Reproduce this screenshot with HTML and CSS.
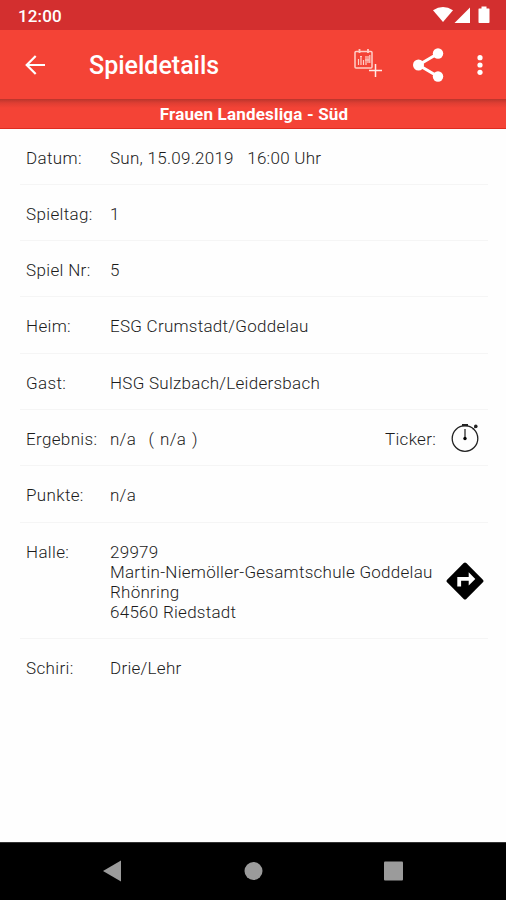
FILE: index.html
```html
<!DOCTYPE html>
<html lang="de">
<head>
<meta charset="utf-8">
<title>Spieldetails</title>
<link rel="stylesheet" href="styles.css">
</head>
<body>
<div class="screen">
  <div class="status">
    <span class="clock">12:00</span>
    <svg class="status-icons" width="58" height="18" viewBox="0 0 58 18" fill="#fff">
      <path d="M0 4.2Q10 -2 20 4.2L10 16z"/><path d="M37 1.5V17H21.5z"/>
      <path d="M46 2.5h2.5V.5h5v2H56q.5 0 .5.8v13q0 .7-.8.7h-9.4q-.8 0-.8-.7v-13q0-.8.5-.8z"/>
    </svg>
  </div>
  <header class="toolbar">
    <svg class="back" width="20" height="20" viewBox="0 0 20 20" fill="none" stroke="#fff" stroke-width="2.2"><path d="M20 10H2M10.7 1L1.7 10l9 9"/></svg>
    <h1>Spieldetails</h1>
    <svg class="calendar" width="29" height="29" viewBox="0 0 29 29" fill="none" stroke="#ffcfc8" stroke-width="1.5">
      <rect x="2" y="2.5" width="17" height="16.5" rx="1"/>
      <path d="M6.5 0v4M15 0v4" stroke-width="1.8"/>
      <path d="M5.5 10v6M8 8v8M10.5 11v5M13 7v9M15 7v7M16.8 6v8M7 7.5h2M12 11h4" stroke-width="1.2"/>
      <path d="M22.5 15v13M16 21.5h13" stroke="#ffe9e6" stroke-width="1.5"/>
    </svg>
    <svg class="share" width="31" height="34" viewBox="0 0 31 34" fill="#fff">
      <path d="M25 5.5L5.5 17 25 28.5" fill="none" stroke="#fff" stroke-width="3"/>
      <circle cx="25" cy="5.5" r="5.2"/><circle cx="5.5" cy="17" r="5.5"/><circle cx="25" cy="28.5" r="5.2"/>
    </svg>
    <svg class="more" width="6" height="22" viewBox="0 0 6 22" fill="#fff"><circle cx="3" cy="3.7" r="2.6"/><circle cx="3" cy="11" r="2.6"/><circle cx="3" cy="18.3" r="2.6"/></svg>
  </header>
  <div class="league">Frauen Landesliga - Süd</div>
  <main class="details">
    <div class="row"><span class="label">Datum:</span><span class="value">Sun, 15.09.2019 <span class="time">16:00 Uhr</span></span></div>
    <div class="row"><span class="label">Spieltag:</span><span class="value">1</span></div>
    <div class="row"><span class="label">Spiel Nr:</span><span class="value">5</span></div>
    <div class="row"><span class="label">Heim:</span><span class="value">ESG Crumstadt/Goddelau</span></div>
    <div class="row"><span class="label">Gast:</span><span class="value">HSG Sulzbach/Leidersbach</span></div>
    <div class="row"><span class="label">Ergebnis:</span><span class="value">n/a <span class="half">( n/a )</span></span>
      <span class="ticker">Ticker:</span>
      <svg class="watch" width="30" height="30" viewBox="0 0 30 30" fill="none" stroke="#222">
        <circle cx="15" cy="15.5" r="12.8" stroke-width="1.3"/><path d="M12 2.2h6" stroke-width="2.4"/><path d="M15 6v8" stroke="#777" stroke-width="2"/>
        <circle cx="15" cy="15.5" r="1.7" fill="#000" stroke="none"/><circle cx="25.8" cy="3.4" r="1.8" fill="#222" stroke="none"/><path d="M23 6.2l2-2"/>
      </svg>
    </div>
    <div class="row"><span class="label">Punkte:</span><span class="value">n/a</span></div>
    <div class="row hall"><span class="label">Halle:</span><span class="value">29979<br>Martin-Niemöller-Gesamtschule Goddelau<br>Rhönring<br>64560 Riedstadt</span>
      <svg class="route" width="38" height="38" viewBox="0 0 38 38"><path d="M17.7 1.1q1.3-1.2 2.6 0L36.9 17.7q1.2 1.3 0 2.6L20.3 36.9q-1.3 1.2-2.6 0L1.1 20.3q-1.2-1.3 0-2.6z"/><path d="M11.3 24.5V15h11.4v-4.7l6.6 6.7-6.6 6.6v-4.8h-7.6v5.7z" fill="#fff"/></svg>
    </div>
    <div class="row"><span class="label">Schiri:</span><span class="value">Drie/Lehr</span></div>
  </main>
  <nav class="navbar">
    <svg width="20" height="22" viewBox="0 0 20 22"><path d="M0 11L18 .5v21z"/></svg>
    <svg width="20" height="22" viewBox="0 0 20 22"><circle cx="10.5" cy="11" r="9"/></svg>
    <svg width="20" height="22" viewBox="0 0 20 22"><rect x="1" y="1.5" width="19" height="19" rx="1"/></svg>
  </nav>
</div>
</body>
</html>
```

FILE: styles.css
```css
* { box-sizing: border-box; }
body { margin: 0; font-family: Roboto, sans-serif; }
svg { display: block; flex: none; }
.screen { width: 506px; height: 900px; display: flex; flex-direction: column; background: #fefefe; overflow: hidden; }
.status { height: 30px; flex: none; background: #d32f2f; color: #fff; display: flex; justify-content: space-between; padding: 7px 15px 0 18px; }
.clock { font-size: 17px; font-weight: 500; line-height: 19px; letter-spacing: .15px; }
.status-icons { margin-top: -1px; }
.toolbar { height: 69px; flex: none; background: #f44336; display: flex; align-items: center; padding-left: 25px; color: #fff; }
h1 { margin: 2px 0 0 44px; width: 264px; font-size: 25px; font-weight: 500; line-height: 30px; }
.calendar { margin-top: -2px; }
.share { margin-left: 31px; }
.more { margin-left: 32.5px; }
.league { height: 30px; flex: none; background: linear-gradient(#b9352c, #df3e33 4px, #f44336 9px); border-bottom: 1px solid #de2c20; color: #fff; text-align: center; font-size: 17px; font-weight: 700; line-height: 30px; letter-spacing: .18px; padding-left: 2px; }
.details { flex: 1; padding: 0 18px 0 20px; }
.row { display: flex; min-height: 56.3px; padding: 19.1px 0 15px 6px; border-bottom: 1px solid #f5f5f5; font-size: 17px; font-weight: 300; line-height: 20.1px; color: #1c1c1c; letter-spacing: .27px; }
.row:first-child { min-height: 55.8px; }
.row:last-child { border-bottom: 0; }
.label { width: 84px; flex: none; white-space: nowrap; letter-spacing: .35px; }
.value { white-space: nowrap; }
.time { margin-left: 9px; }
.half { margin-left: 8px; word-spacing: 1.5px; }
.ticker { margin-left: auto; }
.watch { margin: -6px 8px -6px 14px; }
.hall { height: 116.5px; }
.route { margin: 20px 4px 0 auto; }
.navbar { height: 58px; flex: none; background: #000; border-top: 1px solid #333; display: flex; justify-content: center; align-items: center; gap: 120px; padding-bottom: 2px; fill: #9b9b9b; }
```
